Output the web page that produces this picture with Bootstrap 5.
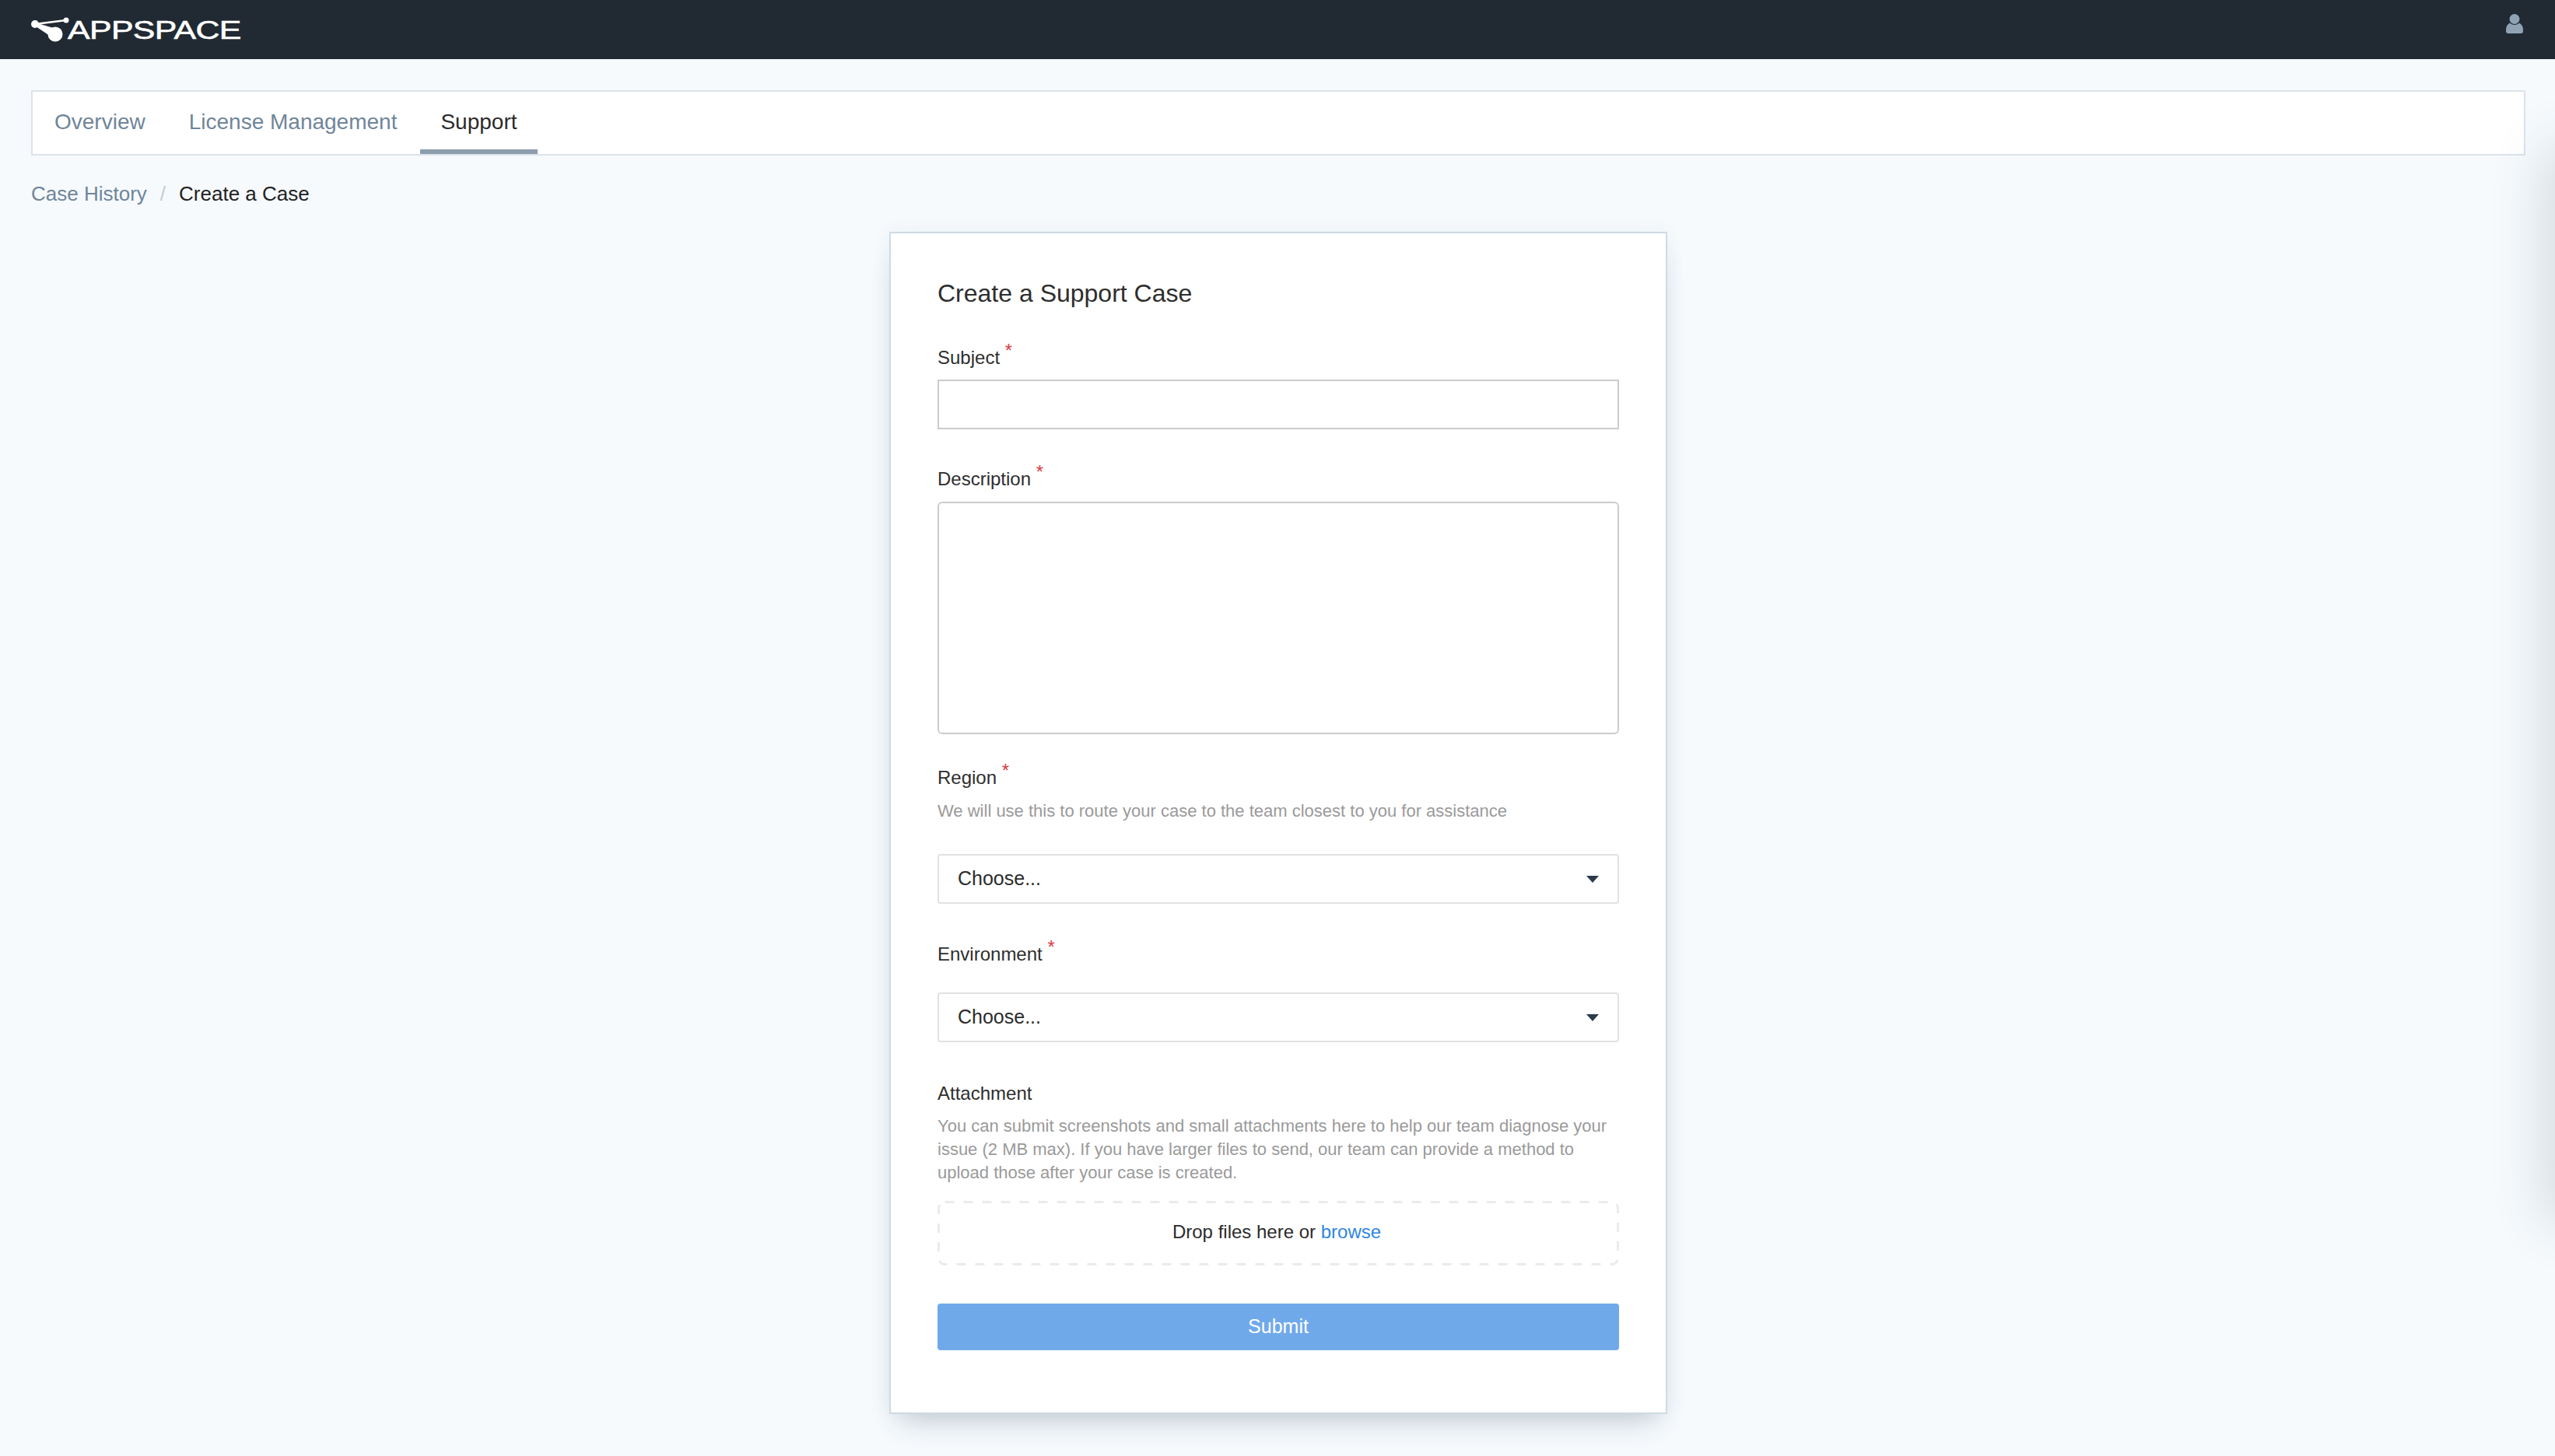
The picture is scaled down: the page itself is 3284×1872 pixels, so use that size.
<!DOCTYPE html>
<html lang="en">
<head>
<meta charset="utf-8">
<title>Create a Support Case</title>
<link href="https://cdn.jsdelivr.net/npm/bootstrap@5.3.0/dist/css/bootstrap.min.css" rel="stylesheet">
<style>
html,body{height:100%;}
body{background:#f6fafd;font-family:"Liberation Sans",Arial,sans-serif;font-size:24px;color:#2e2e2e;overflow:hidden;}
.app-top{height:76px;background:#212a33;padding:0 41px 0 40px;}
.logo-word{display:inline-block;font-size:34px;line-height:1;color:#fff;-webkit-text-stroke:.6px #fff;transform:scaleX(1.26);transform-origin:left center;margin-left:-3px;letter-spacing:-.5px;}
.user-ic{width:22px;height:25px;align-self:flex-start;margin-top:18px;}
.app-tabs{margin:40px 38px 0 40px;height:84px;background:#fff;border:2px solid #dde3ec;padding:0 0 0 2px;gap:4px;}
.app-tabs .nav-link{font-size:28px;color:#708599;padding:0 26px;height:80px;line-height:78px;border-bottom:6px solid transparent;margin-bottom:0;}
.app-tabs .nav-link.active{color:#2b2b2b;border-bottom-color:#8c9dae;}
.crumbs{margin:0 0 0 40px;padding:0;height:98px;align-items:center;font-size:26px;--bs-breadcrumb-divider-color:#c5cbd0;--bs-breadcrumb-item-padding-x:17px;--bs-breadcrumb-margin-bottom:0;}
.crumbs a{color:#708599;text-decoration:none;}
.crumbs .active{color:#222;}
.case-card{width:1000px;height:1520px;margin:0 auto;position:relative;left:1px;border:2px solid #cfdbe3;border-radius:0;box-shadow:0 22px 34px -14px rgba(40,60,90,.24),0 0 24px rgba(40,60,90,.05);padding:0 60px;background:#fff;}
.case-title{font-size:32px;font-weight:400;line-height:40px;margin:57px 0 0;color:#2e2e2e;}
.fld-label{font-size:24px;line-height:30px;margin:0;color:#2e2e2e;display:block;}
.fld-star{color:#e03a45;font-size:24px;position:relative;top:-9px;line-height:0;}
.fld-hint{font-size:22px;line-height:30px;color:#9a9a9a;margin:0;}
.fld-input{height:64px;border:2px solid #cccccc;border-radius:0;margin-top:13px;}
.fld-area{height:299px;border:2px solid #cccccc;border-radius:6px;resize:none;margin-top:14px;}
.fld-select{height:64px;border:2px solid #e2e2e2;border-radius:4px;font-size:25px;color:#2b2b2b;padding:0 0 0 24px;background-size:16px 9px;background-position:right 24px center;background-image:url("data:image/svg+xml,%3Csvg xmlns='http://www.w3.org/2000/svg' viewBox='0 0 16 9'%3E%3Cpath fill='%232c3a4b' d='M0 0h16L8 9z'/%3E%3C/svg%3E");}
.drop-zone{height:83px;position:relative;font-size:24px;color:#2b2b2b;margin-top:21px;padding:0 4px 4px 0;}
.drop-zone a{color:#2f86e0;text-decoration:none;}
.drop-line{position:absolute;inset:0;width:100%;height:100%;}
.send-btn{height:60px;margin-top:49px;background:#70a9ea;border:0;border-radius:4px;font-size:25px;color:#fff;}
.at-subject{margin-top:48px}.at-desc{margin-top:49px}.at-region{margin-top:41px}.at-env{margin-top:50px}.at-attach{margin-top:51px}
.hint-region{margin-top:13px}.hint-attach{margin-top:12px}
.sel-region{margin-top:40px}.sel-env{margin-top:34px}
.edge-shade{position:fixed;right:-60px;top:200px;width:60px;height:1360px;box-shadow:0 0 70px 10px rgba(70,80,95,.2);}
</style>
</head>
<body>
<header class="app-top d-flex justify-content-between align-items-center">
  <div class="d-flex align-items-center">
    <svg width="50" height="32" viewBox="0 0 50 32" fill="none" aria-hidden="true">
      <path d="M5 9 L45 4" stroke="#fff" stroke-width="2.500"/>
      <path d="M5 7 L6 12 L27 26 L32 15 Z" fill="#fff"/>
      <circle cx="5" cy="9" r="5" fill="#fff"/><circle cx="45" cy="4" r="3.500" fill="#fff"/>
      <circle cx="31" cy="22" r="9.500" fill="#fff"/>
    </svg>
    <span class="logo-word">APPSPACE</span>
  </div>
  <svg class="user-ic" viewBox="0 0 22 25" aria-hidden="true"><circle cx="11" cy="6.500" r="6.500" fill="#8fa3b5"/><path d="M0 20c0-4 2-7 5-8.500 1.500 1.500 3.500 2.500 6 2.500s4.500-1 6-2.500c3 1.500 5 4.500 5 8.500v2c0 2-1 3-3 3H3c-2 0-3-1-3-3z" fill="#8fa3b5"/></svg>
</header>

<nav class="nav app-tabs">
  <a class="nav-link" href="#">Overview</a>
  <a class="nav-link" href="#">License Management</a>
  <a class="nav-link active" href="#">Support</a>
</nav>

<ol class="breadcrumb crumbs">
  <li class="breadcrumb-item"><a href="#">Case History</a></li>
  <li class="breadcrumb-item active">Create a Case</li>
</ol>

<main class="card case-card">
  <h1 class="case-title">Create a Support Case</h1>
  <form>
    <label class="fld-label at-subject" for="f1">Subject <span class="fld-star">*</span></label>
    <input id="f1" class="form-control fld-input" type="text">

    <label class="fld-label at-desc" for="f2">Description <span class="fld-star">*</span></label>
    <textarea id="f2" class="form-control fld-area"></textarea>

    <label class="fld-label at-region" for="f3">Region <span class="fld-star">*</span></label>
    <p class="fld-hint hint-region">We will use this to route your case to the team closest to you for assistance</p>
    <select id="f3" class="form-select fld-select sel-region"><option>Choose...</option></select>

    <label class="fld-label at-env" for="f4">Environment <span class="fld-star">*</span></label>
    <select id="f4" class="form-select fld-select sel-env"><option>Choose...</option></select>

    <label class="fld-label at-attach">Attachment</label>
    <p class="fld-hint hint-attach">You can submit screenshots and small attachments here to help our team diagnose your issue (2 MB max). If you have larger files to send, our team can provide a method to upload those after your case is created.</p>
    <div class="drop-zone d-flex align-items-center justify-content-center">
      <svg class="drop-line" aria-hidden="true"><rect x="1.500" y="1.500" width="873" height="80" rx="8" fill="none" stroke="#ebebeb" stroke-width="3" stroke-dasharray="12 12"/></svg>
      <span>Drop files here or <a href="#">browse</a></span>
    </div>
    <button type="button" class="btn btn-primary w-100 send-btn">Submit</button>
  </form>
</main>
<div class="edge-shade"></div>
<script src="https://cdn.jsdelivr.net/npm/bootstrap@5.3.0/dist/js/bootstrap.bundle.min.js"></script>
</body>
</html>
